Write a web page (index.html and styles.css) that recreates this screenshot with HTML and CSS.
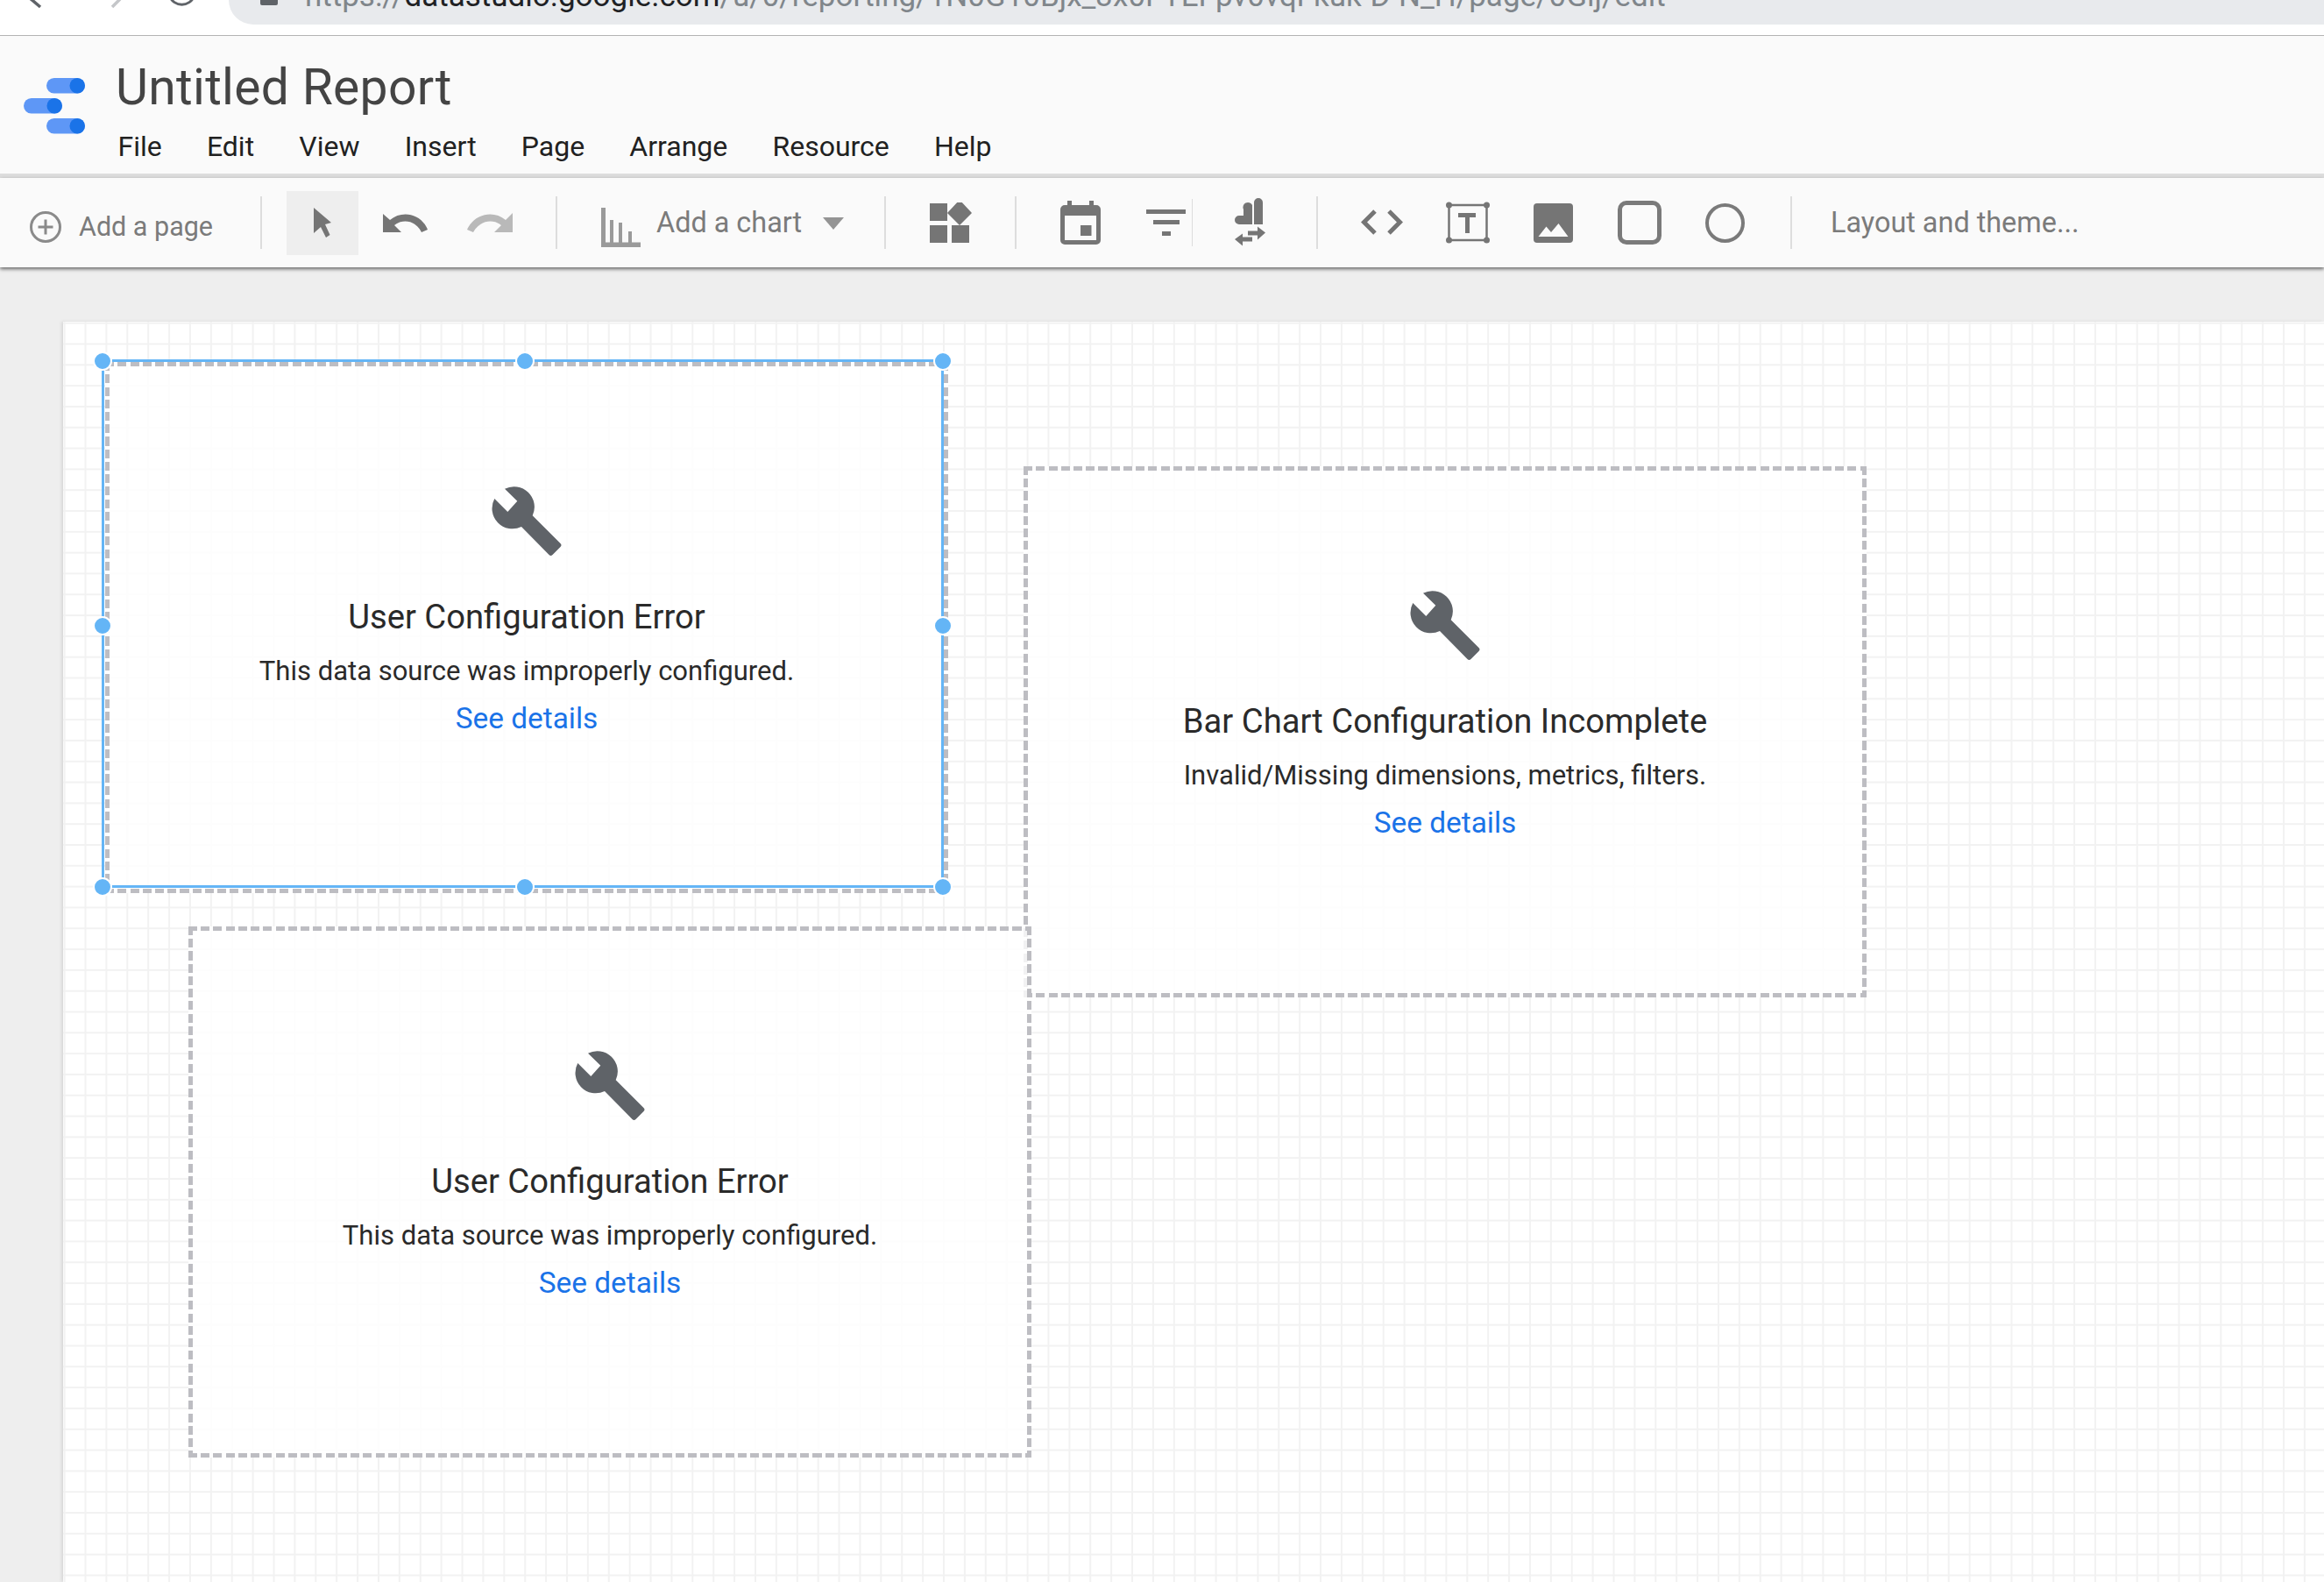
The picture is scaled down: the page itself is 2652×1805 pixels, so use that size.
FILE: index.html
```html
<!DOCTYPE html>
<html>
<head>
	<title>Untitled Report</title>
	<link rel="stylesheet" href="styles.css">
</head>
<body>
	<!-- browser bar, cut off at the top of the picture -->
	<div class="browser-bar">
		<svg class="nav-icons" width="261" height="28" viewBox="0 0 261 28">
			<path d="M33 -3 L46 8" fill="none" stroke="#5f6368" stroke-width="3.5"/>
			<path d="M137 -1 L128 8" fill="none" stroke="#c4c6c9" stroke-width="3.5"/>
			<path d="M194 -4 A14 12.5 0 0 0 221 -4" fill="none" stroke="#5f6368" stroke-width="3"/>
		</svg>
		<div class="address-bar">
			<span class="lock"></span>
			<span class="url">https://<b>datastudio.google.com</b>/u/0/reporting/1N0G10Bjx_3x0FTEFpv0vqFkuk-D-N_H/page/0Gij/edit</span>
		</div>
	</div>

	<header class="title-bar">
		<svg class="logo" width="70" height="64" viewBox="0 0 70 64">
			<rect x="26" y="0" width="44" height="17.5" rx="8.75" fill="#5e97f6"/>
			<circle cx="61.2" cy="8.75" r="8.75" fill="#1a73e8"/>
			<rect x="0" y="23" width="44" height="17.5" rx="8.75" fill="#5e97f6"/>
			<circle cx="35.2" cy="31.75" r="8.75" fill="#1a73e8"/>
			<rect x="26" y="46" width="44" height="17.5" rx="8.75" fill="#5e97f6"/>
			<circle cx="61.2" cy="54.75" r="8.75" fill="#1a73e8"/>
		</svg>
		<div class="title-text">
			<h1 class="report-name">Untitled Report</h1>
			<nav class="menu">
				<span>File</span>
				<span>Edit</span>
				<span>View</span>
				<span>Insert</span>
				<span>Page</span>
				<span>Arrange</span>
				<span>Resource</span>
				<span>Help</span>
			</nav>
		</div>
	</header>

	<div class="toolbar">
		<div class="add-page">
			<svg width="36" height="36" viewBox="0 0 36 36">
				<circle cx="18" cy="18" r="16.5" fill="none" stroke="#8a8a8a" stroke-width="3"/>
				<path d="M18 9.5V26.5M9.5 18H26.5" stroke="#8a8a8a" stroke-width="3"/>
			</svg>
			<span class="tool-text add-page-text">Add a page</span>
		</div>
		<span class="sep sep-1"></span>
		<div class="select-btn">
			<svg width="22" height="36" viewBox="0 0 22 36">
				<path d="M1 1 L21 18 L14 20 L19.500 32 L15 35 L9 23 L1 30 Z" fill="#757575"/>
			</svg>
		</div>
		<svg class="undo" width="51" height="24" viewBox="0 0 51 24">
			<path d="M0 2 L0 23 L21 23 L13 15 C23 7 38 10 44 23 L51 20 C44 2 22 -3 8 9 Z" fill="#757575"/>
		</svg>
		<svg class="redo" width="52" height="24" viewBox="0 0 52 24">
			<path d="M52 1 L52 23 L31 23 L39 15 C29 7 14 10 7 23 L0 20 C8 2 30 -3 44 9 Z" fill="#b9b9b9"/>
		</svg>
		<span class="sep sep-2"></span>
		<svg class="chart-icon" width="45" height="45" viewBox="0 0 45 45">
			<path d="M0 0H5V39.500H45V45H0Z M10 14H14V39.500H10Z M20 17H24V39.500H20Z M31 27H35V39.500H31Z" fill="#9a9a9a"/>
		</svg>
		<span class="tool-text chart-text">Add a chart</span>
		<span class="caret"></span>
		<span class="sep sep-3"></span>
		<svg class="components" width="48" height="46" viewBox="0 0 48 46">
			<path d="M0 1H20V21H0Z M34 -3L48 12 34 26 20 12Z M0 26H20V46H0Z M25 26H45V46H25Z" fill="#757575"/>
		</svg>
		<span class="sep sep-4"></span>
		<svg class="calendar" width="46" height="50" viewBox="0 0 46 50">
			<path fill-rule="evenodd" d="M8 0H13V5H33V0H38V5H41A5 5 0 0 1 46 10V45A5 5 0 0 1 41 50H5A5 5 0 0 1 0 45V10A5 5 0 0 1 5 5H8Z M5 17V45H41V17Z" fill="#757575"/>
			<path d="M23 28H35.500V40H23Z" fill="#757575"/>
		</svg>
		<svg class="filter" width="45" height="30" viewBox="0 0 45 30">
			<path d="M0 0H45V5H0Z M8 12H38V17H8Z M18 25H28V30H18Z" fill="#757575"/>
		</svg>
		<span class="sep-thin"></span>
		<svg class="data-control" width="35" height="56" viewBox="0 0 35 56">
			<path d="M22 5A5 5 0 0 1 32 5V30H22Z M10 13A5 5 0 0 1 20 8H20V30H5A5 5 0 0 1 0 25V25A5 5 0 0 1 5 20H10Z" fill="#757575"/>
			<path d="M15 38H26V33L35 40 26 48V43H15Z M20 45V50H9V55L0 47.500 9 41V45Z" fill="#757575" transform="translate(0 -0.500)"/>
		</svg>
		<span class="sep sep-5"></span>
		<svg class="code" width="48" height="30" viewBox="0 0 48 30">
			<path d="M16 2 L3.500 14.500 L16 27 M32 2 L44.500 14.500 L32 27" fill="none" stroke="#757575" stroke-width="5"/>
		</svg>
		<svg class="text-box" width="50" height="48" viewBox="0 0 50 48">
			<rect x="3.500" y="4" width="43" height="40" fill="none" stroke="#757575" stroke-width="2.500"/>
			<circle cx="3.500" cy="4" r="3.500" fill="#757575"/>
			<circle cx="46.500" cy="4" r="3.500" fill="#757575"/>
			<circle cx="3.500" cy="44" r="3.500" fill="#757575"/>
			<circle cx="46.500" cy="44" r="3.500" fill="#757575"/>
			<path d="M14 13H34V18H27V36H22V18H14Z" fill="#757575"/>
		</svg>
		<svg class="image-icon" width="45" height="45" viewBox="0 0 45 45">
			<rect width="45" height="45" rx="4" fill="#757575"/>
			<path d="M5.500 38 L14.500 26.500 L20 33 L28.500 23 L39.500 38 Z" fill="#fafafa"/>
		</svg>
		<span class="shape-square"></span>
		<span class="shape-circle"></span>
		<span class="sep sep-6"></span>
		<span class="tool-text layout-text">Layout and theme...</span>
	</div>

	<main class="workspace">
		<div class="page">
			<div class="card card-two">
				<svg class="wrench" width="80" height="80" viewBox="0 0 80 80"><use href="#wrench-shape"/></svg>
				<div class="card-title">Bar Chart Configuration Incomplete</div>
				<div class="card-desc">Invalid/Missing dimensions, metrics, filters.</div>
				<a class="card-link">See details</a>
			</div>
			<div class="card card-three">
				<svg class="wrench" width="80" height="80" viewBox="0 0 80 80"><use href="#wrench-shape"/></svg>
				<div class="card-title">User Configuration Error</div>
				<div class="card-desc">This data source was improperly configured.</div>
				<a class="card-link">See details</a>
			</div>
			<div class="card card-one">
				<svg class="wrench" width="80" height="80" viewBox="0 0 80 80">
					<path id="wrench-shape" d="M15 2.700A23.300 23.300 0 0 1 46.700 33.300L78.500 65Q80.500 67 78.500 69L69.500 78Q67.500 80 65.500 78L34 46A23.300 23.300 0 0 1 3.300 14L18.300 29 29.300 16.700Z" fill="#5f6368"/>
				</svg>
				<div class="card-title">User Configuration Error</div>
				<div class="card-desc">This data source was improperly configured.</div>
				<a class="card-link">See details</a>
			</div>
			<div class="selection">
				<span class="handle h-tl"></span>
				<span class="handle h-tm"></span>
				<span class="handle h-tr"></span>
				<span class="handle h-ml"></span>
				<span class="handle h-mr"></span>
				<span class="handle h-bl"></span>
				<span class="handle h-bm"></span>
				<span class="handle h-br"></span>
			</div>
		</div>
	</main>
</body>
</html>
```
FILE: styles.css
```css
* {
	box-sizing: border-box;
}
html, body {
	margin: 0;
	height: 100%;
}
body {
	background-color: #eeeeee;
	font-family: Roboto, "Liberation Sans", sans-serif;
	overflow: hidden;
	display: flex;
	flex-direction: column;
}

/* browser bar */
.browser-bar {
	height: 41px;
	flex: none;
	background-color: #fff;
	border-bottom: 1px solid #b4b4b4;
	display: flex;
	align-items: flex-start;
}
.nav-icons {
	flex: none;
}
.address-bar {
	flex: 1;
	height: 28px;
	background-color: #e8eaed;
	border-bottom-left-radius: 28px;
	display: flex;
	align-items: flex-start;
	overflow: hidden;
}
.lock {
	width: 20px;
	height: 6px;
	margin-left: 36px;
	background-color: #5f6368;
	border-radius: 0 0 2px 2px;
	flex: none;
}
.url {
	margin-left: 31px;
	margin-top: -24px;
	line-height: 40px;
	font-size: 35px;
	color: #80868b;
	white-space: nowrap;
}
.url b {
	font-weight: 400;
	color: #202124;
}

/* report title and menu */
.title-bar {
	height: 162px;
	flex: none;
	background-color: #fafafa;
	border-bottom: 5px solid #dddddd;
	display: flex;
	align-items: flex-start;
}
.logo {
	margin-left: 27px;
	margin-top: 48px;
	flex: none;
}
.title-text {
	margin-left: 35px;
}
.report-name {
	margin: 24px 0 0 0;
	font-size: 57px;
	letter-spacing: 0.3px;
	line-height: 70px;
	font-weight: 400;
	color: #444444;
	white-space: nowrap;
}
.menu {
	display: flex;
	gap: 51.2px;
	margin-top: 12px;
	margin-left: 2.5px;
	font-size: 32px;
	line-height: 40px;
	color: #212121;
}

/* toolbar */
.toolbar {
	height: 102px;
	flex: none;
	background-color: #fafafa;
	box-shadow: 0 2px 4px #666666;
	display: flex;
	align-items: center;
	padding-left: 34px;
	position: relative;
}
.toolbar svg {
	flex: none;
}
.tool-text {
	font-size: 32.4px;
	line-height: 40px;
	color: #7b7b7b;
	white-space: nowrap;
	flex: none;
}
.add-page {
	display: flex;
	align-items: center;
	margin-top: 10px;
	width: 208px;
}
.add-page-text {
	margin-left: 20px;
	font-size: 30.5px;
}
.sep {
	width: 2px;
	height: 60px;
	background-color: #dddddd;
	flex: none;
}
.sep-thin {
	width: 1px;
	height: 54px;
	margin-left: 7px;
	background-color: #dddddd;
	flex: none;
}
.sep-1 { margin-left: 55px; }
.sep-2 { margin-left: 49px; }
.sep-3 { margin-left: 46px; }
.sep-4 { margin-left: 49px; }
.sep-5 { margin-left: 58px; }
.sep-6 { margin-left: 52px; }
.select-btn {
	width: 82px;
	height: 73px;
	margin-left: 28px;
	background-color: #eeeeee;
	display: flex;
	align-items: center;
	justify-content: center;
	flex: none;
}
.undo { margin-left: 28px; margin-top: -1px; }
.redo { margin-left: 45px; margin-top: -1px; }
.chart-icon { margin-left: 50px; margin-top: 10px; }
.chart-text { margin-left: 18px; width: 166px; }
.caret {
	margin-left: 24px;
	width: 0;
	height: 0;
	border-style: solid;
	border-width: 14px 12px 0 12px;
	border-color: #949494 transparent transparent transparent;
	margin-top: 1px;
	flex: none;
}
.components { margin-left: 50px; margin-top: 0; }
.calendar { margin-left: 50px; margin-top: 0; }
.filter { margin-left: 52px; }
.data-control { margin-left: 48px; }
.code { margin-left: 49px; }
.text-box { margin-left: 49px; }
.image-icon { margin-left: 50px; }
.shape-square {
	width: 50px;
	height: 50px;
	margin-left: 51px;
	border: 5px solid #7a7a7a;
	border-radius: 10px;
	flex: none;
}
.shape-circle {
	width: 45px;
	height: 45px;
	margin-left: 50px;
	border: 4.5px solid #7a7a7a;
	border-radius: 50%;
	flex: none;
}
.layout-text {
	margin-left: 44px;
}

/* canvas */
.workspace {
	flex: 1;
	padding: 62px 0 0 72px;
	min-height: 0;
}
.page {
	position: relative;
	height: 100%;
	background-color: #fff;
	background-image:
		linear-gradient(to right, #f2f2f2 2px, transparent 2px),
		linear-gradient(to bottom, #f2f2f2 2px, transparent 2px);
	background-size: 23.9px 23.82px;
	background-position: 24.5px 24.5px;
	box-shadow: -2px 0 3px #d8d8d8;
}

/* chart placeholder cards */
.card {
	position: absolute;
	width: 962px;
	height: 606px;
	display: flex;
	flex-direction: column;
	align-items: center;
	padding-top: 142px;
	background-color: rgba(255, 255, 255, 0.8);
	background-image:
		repeating-linear-gradient(to right, #bdbdc2 0 10px, transparent 10px 14.25px),
		repeating-linear-gradient(to right, #bdbdc2 0 10px, transparent 10px 14.25px),
		repeating-linear-gradient(to bottom, #bdbdc2 0 10px, transparent 10px 14.25px),
		repeating-linear-gradient(to bottom, #bdbdc2 0 10px, transparent 10px 14.25px);
	background-size: 100% 5px, 100% 5px, 5px 100%, 5px 100%;
	background-position: top left, bottom left, top left, top right;
	background-repeat: no-repeat;
}
.card-one { left: 48px; top: 46px; }
.card-two { left: 1096px; top: 165px; }
.card-three { left: 143px; top: 690px; }
.wrench {
	display: block;
	flex: none;
}
.card-title {
	margin-top: 46.5px;
	font-size: 38.2px;
	line-height: 44px;
	color: #2a2a2a;
	white-space: nowrap;
}
.card-desc {
	margin-top: 20.5px;
	font-size: 31px;
	line-height: 40px;
	color: #2a2a2a;
	white-space: nowrap;
}
.card-link {
	margin-top: 14px;
	font-size: 33.4px;
	line-height: 40px;
	color: #1a73e8;
	white-space: nowrap;
}

/* selected chart outline */
.selection {
	position: absolute;
	left: 43.5px;
	top: 43px;
	width: 961.5px;
	height: 603px;
	border: 3px solid #64b5f6;
}
.handle {
	position: absolute;
	width: 22px;
	height: 22px;
	margin: -11px 0 0 -11px;
	background-color: #64b5f6;
	border: 2px solid #fff;
	border-radius: 50%;
}
.h-tl { left: -1.5px; top: -1.5px; }
.h-tm { left: calc(50% + 2.5px); top: -1.5px; }
.h-tr { left: calc(100% + 1.5px); top: -1.5px; }
.h-ml { left: -1.5px; top: calc(50% + 2.5px); }
.h-mr { left: calc(100% + 1.5px); top: calc(50% + 2.5px); }
.h-bl { left: -1.5px; top: calc(100% + 1.5px); }
.h-bm { left: calc(50% + 2.5px); top: calc(100% + 1.5px); }
.h-br { left: calc(100% + 1.5px); top: calc(100% + 1.5px); }
```
